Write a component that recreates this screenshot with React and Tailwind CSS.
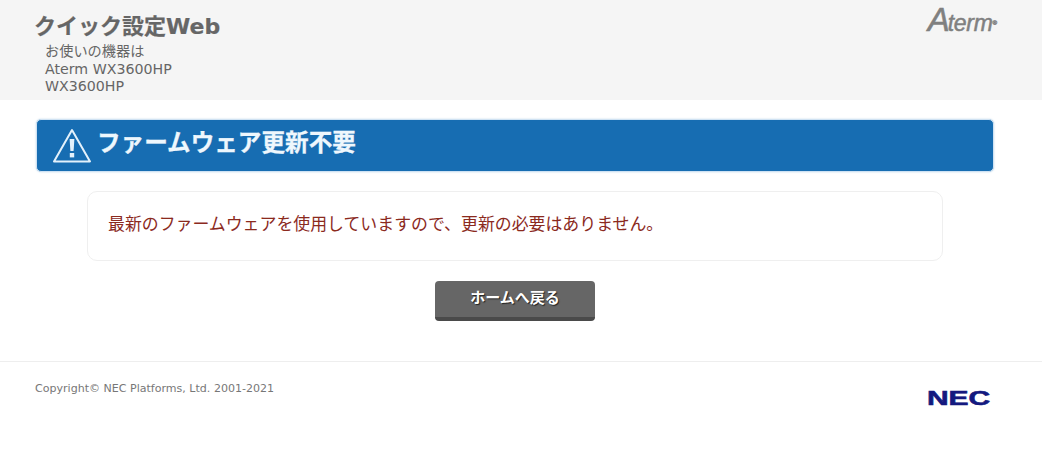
export default function App() {
  const sans = "font-['DejaVu_Sans','Noto_Sans_CJK_JP',sans-serif]";
  return (
    <div className={`w-[1042px] h-[460px] overflow-hidden bg-white ${sans}`}>
      <header className="h-[100px] bg-[#f5f5f5] flex justify-between pl-[35px] pr-[45px]">
        <div className="pt-[13px]">
          <h1 className="text-[22px] leading-[28px] font-bold text-[#666666] -ml-[1px] [-webkit-text-stroke:0.2px_#666666]">クイック設定Web</h1>
          <div className="pl-[10px] text-[14.2px] leading-[17.5px] text-[#666666] mt-[2px]">
            <p>お使いの機器は</p>
            <p>Aterm WX3600HP</p>
            <p>WX3600HP</p>
          </div>
        </div>
        <div className="pt-[5px] font-['Liberation_Sans',sans-serif] italic text-[#808080] leading-[30px] whitespace-nowrap [-webkit-text-stroke:0.5px_#808080]">
          <span className="text-[33px] tracking-[-2px]">A</span>
          <span className="text-[23px] tracking-[-0.3px]">term</span>
          <span className="text-[6px] align-super">®</span>
        </div>
      </header>

      <main className="pl-[36px] pr-[48px] pt-[19px]">
        <div className="h-[53px] rounded-[5px] bg-[#176db2] border border-[#cfe2f3] flex items-center pl-[15px] gap-[5px] shadow-[0_0_2px_#bcd4e8]">
          <svg width="40" height="36" viewBox="0 0 40 36" fill="none" className="shrink-0">
            <path d="M20 2 L38 33.5 H2 Z" stroke="#e3f1fb" strokeWidth="2" strokeLinejoin="round" />
            <path d="M17.6 11 H22.4 L21.6 23 H18.4 Z" fill="#e3f1fb" />
            <rect x="17.8" y="25" width="4.4" height="4.4" fill="#e3f1fb" />
          </svg>
          <h2 className="text-[23.6px] font-bold text-[#eef7fd] leading-none -mt-[4px] [-webkit-text-stroke:0.3px_#eef7fd]">ファームウェア更新不要</h2>
        </div>

        <div className="mx-[51px] mt-[19px] h-[70px] rounded-[10px] border border-[#efefef] flex items-center pl-[20px]">
          <p className="text-[16.9px] text-[#8b2a1e] -mt-[3px]">最新のファームウェアを使用していますので、更新の必要はありません。</p>
        </div>

        <div className="flex justify-center mt-[20px]">
          <button className="w-[160px] h-[40px] rounded-[4px] bg-[#666666] border-b-[4px] border-[#4a4a4a] text-white text-[15px] font-bold [text-shadow:1px_1px_1px_#222] pb-[2px]">
            ホームへ戻る
          </button>
        </div>
      </main>

      <footer className="mt-[40px] border-t border-[#eeeeee] flex justify-between pl-[35px] pr-[52px]">
        <p className="text-[11.05px] text-[#777777] pt-[20px] leading-[14px]">Copyright© NEC Platforms, Ltd. 2001-2021</p>
        <div className="pt-[25px] font-['Liberation_Sans',sans-serif] font-bold text-[#14197f] text-[20px] leading-[22px] [-webkit-text-stroke:0.6px_#14197f] scale-x-[1.5] origin-right">
          NEC
        </div>
      </footer>
    </div>
  );
}
